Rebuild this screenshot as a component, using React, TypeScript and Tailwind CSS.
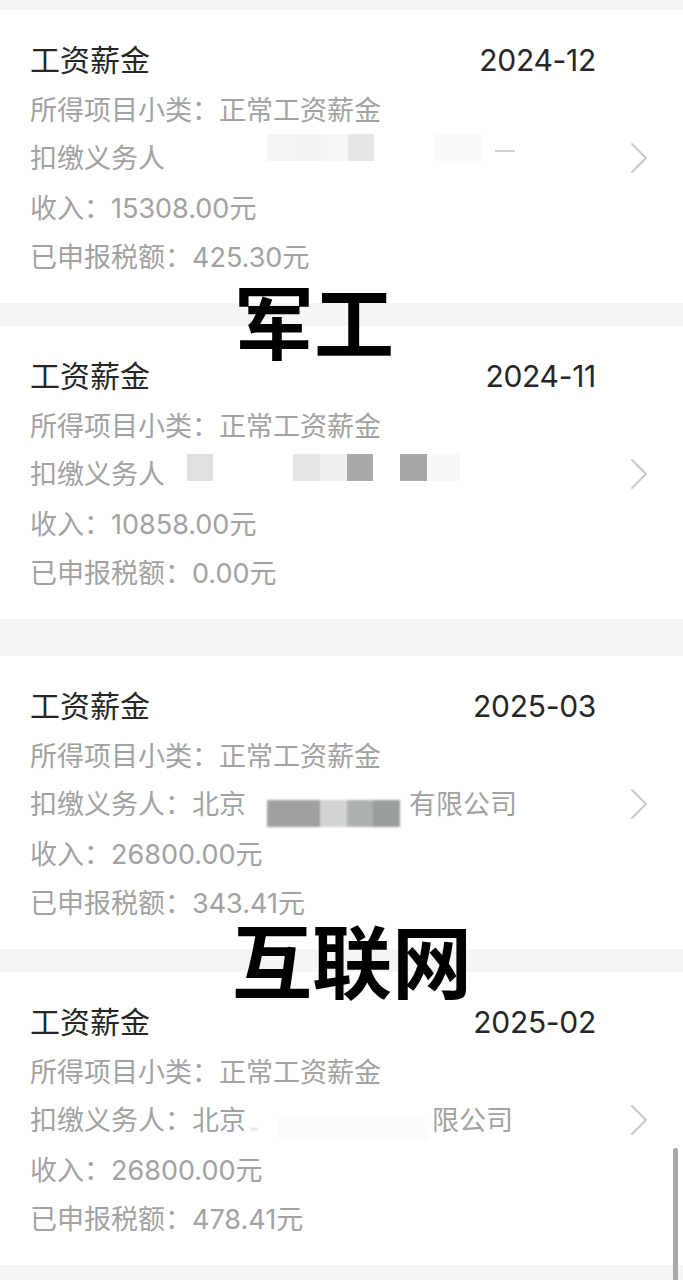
import type { ReactNode } from 'react'

interface Record {
  month: string
  payer: ReactNode
  income: string
  tax: string
}

const font = "font-['Inter','Noto_Sans_CJK_SC',sans-serif]"

function Chevron() {
  return (
    <svg width="18" height="32" viewBox="0 0 18 32" fill="none" className="shrink-0 mb-[4px]">
      <polyline points="2,2 16,16 2,30" stroke="#c9c9c9" strokeWidth="2" strokeLinecap="round" strokeLinejoin="round" />
    </svg>
  )
}

// mosaic block used for the hidden company names
function Block({ w, c, className = '' }: { w: string; c: string; className?: string }) {
  return <div className={`h-[27px] ${w} ${c} ${className}`} />
}

const payerA = (
  <div className="flex items-center">
    <span>扣缴义务人</span>
    <div className="flex items-center mb-[24px] ml-[102px] blur-[0.6px]">
      <Block w="w-[27px]" c="bg-[#f5f5f5]" />
      <Block w="w-[27px]" c="bg-[#f3f3f3]" />
      <Block w="w-[27px]" c="bg-[#f6f6f6]" />
      <Block w="w-[26px]" c="bg-[#e6e6e6]" />
      <Block w="w-[48px]" c="bg-[#fafafa]" className="ml-[60px]" />
      <div className="w-[20px] h-[2px] bg-[#d0d0d0] ml-[13px] mt-[6px]" />
    </div>
  </div>
)

const payerB = (
  <div className="flex items-center">
    <span>扣缴义务人</span>
    <div className="flex items-center mb-[16px] ml-[22px] blur-[0.6px]">
      <Block w="w-[26px]" c="bg-[#e0e0e0]" />
      <Block w="w-[27px]" c="bg-[#e5e5e7]" className="ml-[80px]" />
      <Block w="w-[27px]" c="bg-[#efeff1]" />
      <Block w="w-[26px]" c="bg-[#a9a9ab]" />
      <Block w="w-[27px]" c="bg-[#a6a7a7]" className="ml-[27px]" />
      <Block w="w-[33px]" c="bg-[#f8f8f8]" />
    </div>
  </div>
)

const payerC = (
  <div className="flex items-center">
    <span>扣缴义务人：北京</span>
    <div className="flex items-center mt-[16px] ml-[21px] blur-[1px]">
      <Block w="w-[53px]" c="bg-[#a0a0a2]" className="h-[24px]" />
      <Block w="w-[27px]" c="bg-[#d3d5d5]" className="h-[24px]" />
      <Block w="w-[26px]" c="bg-[#aeb1b1]" className="h-[24px]" />
      <Block w="w-[27px]" c="bg-[#999d9e]" className="h-[24px]" />
    </div>
    <span className="ml-[9px]">有限公司</span>
  </div>
)

const payerD = (
  <div className="flex items-center">
    <span>扣缴义务人：北京</span>
    <div className="flex items-center ml-[4px] mt-[14px] blur-[1px]">
      <div className="w-[8px] h-[2px] bg-[#d8d8d8]" />
      <div className="w-[150px] h-[22px] bg-[#fbfbfb] ml-[20px]" />
    </div>
    <span className="ml-[4px]">限公司</span>
  </div>
)

const records: Record[] = [
  { month: '2024-12', payer: payerA, income: '15308.00', tax: '425.30' },
  { month: '2024-11', payer: payerB, income: '10858.00', tax: '0.00' },
  { month: '2025-03', payer: payerC, income: '26800.00', tax: '343.41' },
  { month: '2025-02', payer: payerD, income: '26800.00', tax: '478.41' },
]

function Card({ r, className = '' }: { r: Record; className?: string }) {
  return (
    <div className={`bg-white h-[293px] pl-[30px] pr-[35px] pt-[30px] ${className}`}>
      <div className="flex items-center justify-between h-[40px] pr-[52px] text-[30px] text-[#262626]">
        <span>工资薪金</span>
        <span className="tracking-[-0.3px]">{r.month}</span>
      </div>
      <div className="mt-[6px] text-[27px] text-[#a2a2a2]">
        <div className="h-[49px] leading-[49px]">所得项目小类：正常工资薪金</div>
        <div className="h-[49px] flex items-center justify-between">
          {r.payer}
          <Chevron />
        </div>
        <div className="h-[49px] leading-[49px]">收入：{r.income}元</div>
        <div className="h-[49px] leading-[49px]">已申报税额：{r.tax}元</div>
      </div>
    </div>
  )
}

export default function App() {
  return (
    <div className={`relative w-[683px] h-[1280px] overflow-hidden bg-[#f4f5f7] pt-[10px] ${font}`}>
      <Card r={records[0]} className="mb-[23px]" />
      <Card r={records[1]} className="mb-[37px]" />
      <Card r={records[2]} className="mb-[23px]" />
      <Card r={records[3]} />

      {/* caption stickers laid over the screenshot */}
      <div className="absolute left-[234px] top-[288px] text-[80px] leading-[60px] font-bold text-black font-['Noto_Sans_CJK_SC',sans-serif]">
        军工
      </div>
      <div className="absolute left-[232px] top-[927px] text-[80px] leading-[60px] font-bold text-black font-['Noto_Sans_CJK_SC',sans-serif]">
        互联网
      </div>

      {/* scrollbar */}
      <div className="absolute right-[5px] top-[1148px] w-[5px] h-[140px] rounded-full bg-[#a9a9a9]" />
    </div>
  )
}
